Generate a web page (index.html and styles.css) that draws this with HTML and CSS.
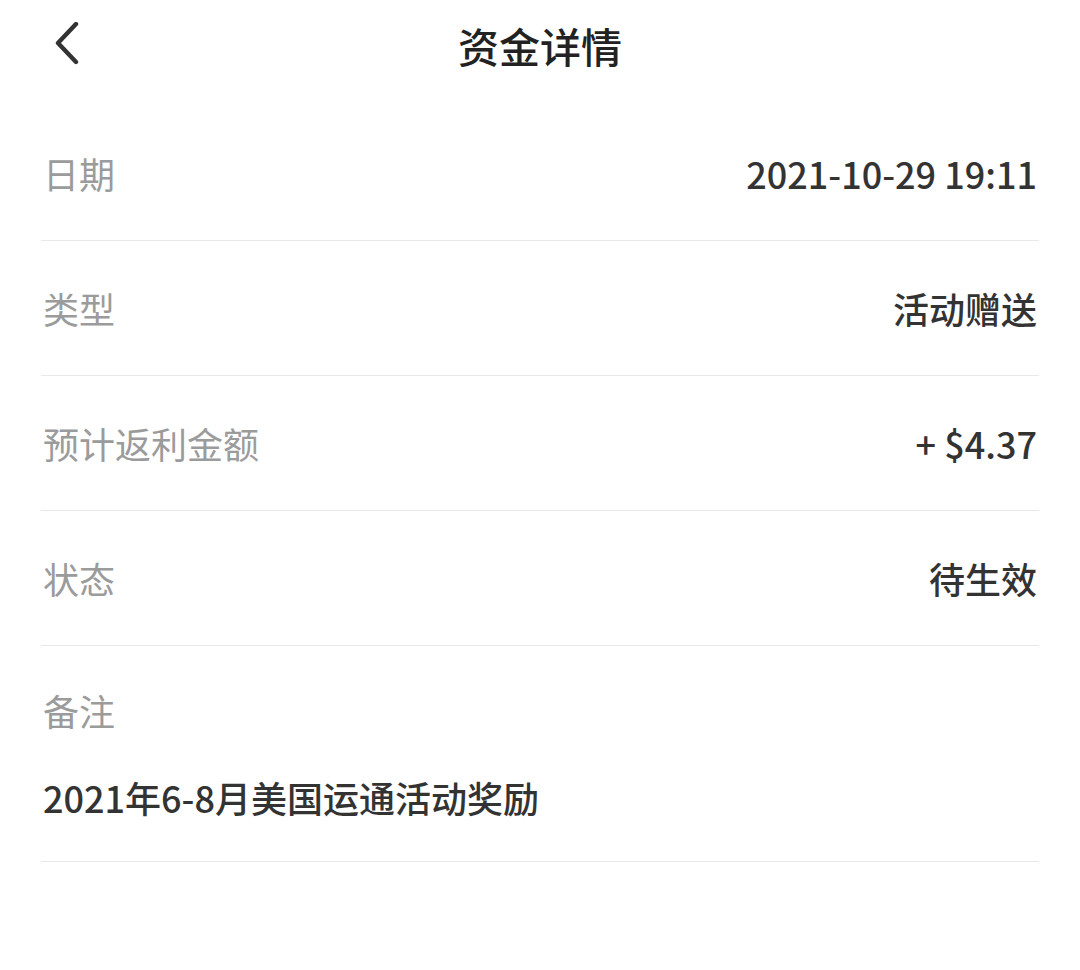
FILE: index.html
```html
<!DOCTYPE html>
<html lang="zh-CN">
<head>
    <meta charset="UTF-8">
    <meta name="viewport" content="width=device-width, initial-scale=1.0">
    <title>资金详情</title>
    <link rel="stylesheet" href="styles.css">
</head>
<body>
    <header class="nav">
        <a class="back" href="#">
            <svg width="30" height="44" viewBox="0 0 30 44">
                <polyline points="24,2 6,21 24,40" fill="none" stroke="#333" stroke-width="4.4" stroke-linecap="round" stroke-linejoin="round"/>
            </svg>
        </a>
        <h1>资金详情</h1>
    </header>
    <div class="list">
        <div class="row">
            <span class="label">日期</span>
            <span class="value">2021-10-29 19:11</span>
        </div>
        <div class="row">
            <span class="label">类型</span>
            <span class="value">活动赠送</span>
        </div>
        <div class="row">
            <span class="label">预计返利金额</span>
            <span class="value">+ $4.37</span>
        </div>
        <div class="row">
            <span class="label">状态</span>
            <span class="value">待生效</span>
        </div>
        <div class="row note">
            <span class="label">备注</span>
            <span class="value">2021年6-8月美国运通活动奖励</span>
        </div>
    </div>
</body>
</html>
```

FILE: styles.css
```css
body {
    margin: 0;
    padding: 0;
    background: #fff;
    font-family: "Noto Sans CJK SC", "Noto Sans", sans-serif;
    color: #333;
}
.nav {
    position: relative;
    height: 90px;
    display: flex;
    align-items: center;
    justify-content: center;
}
.nav h1 {
    margin: 0;
    font-size: 41px;
    font-weight: 500;
    color: #222;
    line-height: 1;
}
.back {
    position: absolute;
    left: 52px;
    top: 22px;
    display: block;
}
.back svg {
    display: block;
}
.list {
    margin: 16px 41px 0 41px;
}
.row {
    height: 134px;
    border-bottom: 1px solid #e8e8e8;
    display: flex;
    align-items: center;
    justify-content: space-between;
    padding: 0 2px 0 2px;
}
.label {
    font-size: 36px;
    color: #9b9b9b;
    line-height: 44px;
}
.value {
    font-size: 36px;
    font-weight: 500;
    color: #333;
    line-height: 44px;
}
.row.note {
    height: auto;
    flex-direction: column;
    align-items: flex-start;
    justify-content: flex-start;
    gap: 43px;
    padding-top: 42px;
    padding-bottom: 42px;
}
```
